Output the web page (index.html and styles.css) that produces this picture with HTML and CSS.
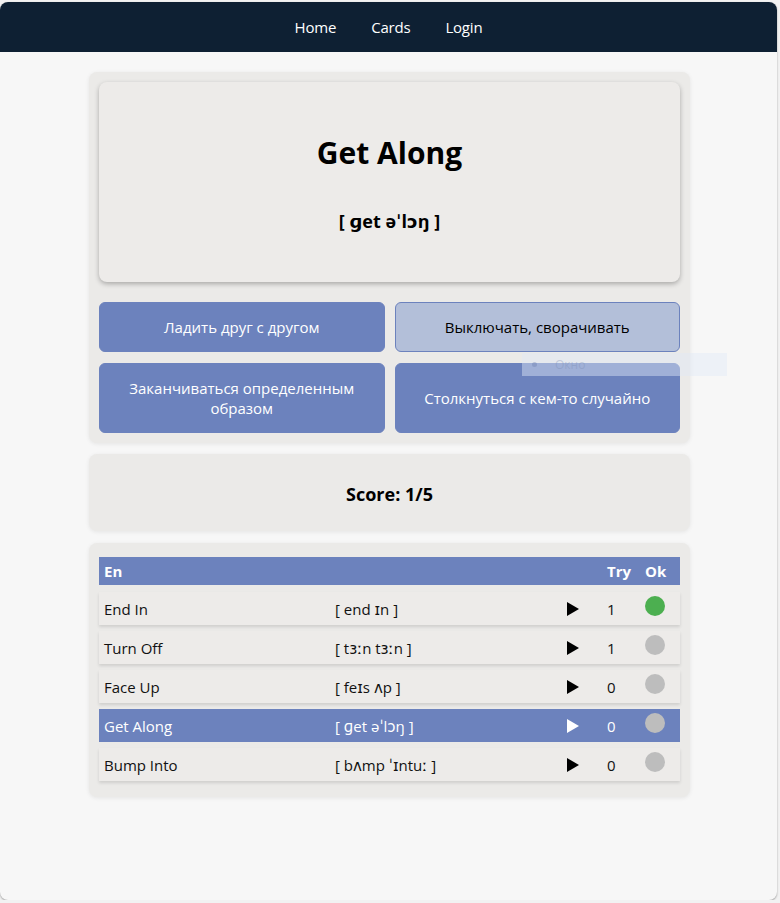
FILE: index.html
```html
<!DOCTYPE html>
<html lang="ru">
<head>
<meta charset="utf-8">
<title>Cards</title>
<link rel="stylesheet" href="styles.css">
</head>
<body>
<div class="app">
  <nav class="nav">
    <a class="nav-link">Home</a>
    <a class="nav-link">Cards</a>
    <a class="nav-link">Login</a>
  </nav>
  <main class="main">
    <section class="panel">
      <div class="flashcard">
        <div class="word">Get Along</div>
        <div class="phon">[ ɡet əˈlɔŋ ]</div>
      </div>
      <div class="options">
        <button class="opt">Ладить друг с другом</button>
        <button class="opt opt-active">Выключать, сворачивать</button>
        <button class="opt">Заканчиваться определенным образом</button>
        <button class="opt">Столкнуться с кем-то случайно</button>
      </div>
    </section>
    <section class="panel score-panel">
      <div class="score">Score: 1/5</div>
    </section>
    <section class="panel table-panel">
      <div class="thead">
        <span>En</span><span></span><span></span><span>Try</span><span>Ok</span>
      </div>
      <div class="row">
        <span>End In</span><span>[ end ɪn ]</span><span class="play"><svg viewBox="0 0 12 14" width="12" height="14"><polygon points="0,0 12,7 0,14"/></svg></span><span>1</span><span class="dot ok"></span>
      </div>
      <div class="row">
        <span>Turn Off</span><span>[ tɜːn tɜːn ]</span><span class="play"><svg viewBox="0 0 12 14" width="12" height="14"><polygon points="0,0 12,7 0,14"/></svg></span><span>1</span><span class="dot"></span>
      </div>
      <div class="row">
        <span>Face Up</span><span>[ feɪs ʌp ]</span><span class="play"><svg viewBox="0 0 12 14" width="12" height="14"><polygon points="0,0 12,7 0,14"/></svg></span><span>0</span><span class="dot"></span>
      </div>
      <div class="row row-active">
        <span>Get Along</span><span>[ ɡet əˈlɔŋ ]</span><span class="play"><svg viewBox="0 0 12 14" width="12" height="14"><polygon points="0,0 12,7 0,14"/></svg></span><span>0</span><span class="dot"></span>
      </div>
      <div class="row">
        <span>Bump Into</span><span>[ bʌmp ˈɪntuː ]</span><span class="play"><svg viewBox="0 0 12 14" width="12" height="14"><polygon points="0,0 12,7 0,14"/></svg></span><span>0</span><span class="dot"></span>
      </div>
    </section>
  </main>
  <div class="ghost"><span class="ghost-dot"></span>Окно</div>
</div>
</body>
</html>
```
FILE: styles.css
```css
* { box-sizing: border-box; }
html, body { margin: 0; padding: 0; }
body {
  background: #f2f2f2;
  font-family: "Open Sans", "DejaVu Sans", sans-serif;
  color: #111;
}
.app {
  position: relative;
  width: 777px;
  height: 898px;
  margin: 2px 0 0 0;
  background: #f7f7f7;
  border-radius: 8px;
  box-shadow: 0 1px 2px rgba(0,0,0,0.35);
}
.nav {
  height: 50px;
  background: #0e2033;
  border-radius: 8px 8px 0 0;
  display: flex;
  justify-content: center;
  align-items: center;
  gap: 35px;
}
.nav-link {
  color: #fff;
  font-size: 15px;
  letter-spacing: -0.2px;
}
.main {
  width: 601px;
  margin: 20px 0 0 89px;
}
.panel {
  background: #ebeae8;
  border-radius: 8px;
  padding: 10px;
  margin-bottom: 11px;
  box-shadow: 0 1px 4px rgba(0,0,0,0.08);
}
.flashcard {
  height: 200px;
  background: #edebe9;
  border-radius: 8px;
  box-shadow: 0 2px 5px rgba(0,0,0,0.28);
  display: flex;
  flex-direction: column;
  align-items: center;
  padding-top: 51px;
}
.word {
  font-size: 30px;
  font-weight: 700;
  line-height: 40px;
  color: #000;
}
.phon {
  font-size: 18px;
  font-weight: 700;
  line-height: 26px;
  margin-top: 35px;
  color: #000;
}
.options {
  margin-top: 20px;
  display: grid;
  grid-template-columns: 1fr 1fr;
  gap: 11px 10px;
}
.opt {
  font-family: inherit;
  font-size: 15px;
  line-height: 20px;
  padding: 14px 20px;
  border: 1px solid #6c82bd;
  border-radius: 6px;
  background: #6c82bd;
  color: #fff;
  text-align: center;
}
.opt-active {
  background: #b3bfd9;
  color: #000;
  border-color: #6c82bd;
}
.score-panel {
  height: 77px;
  display: flex;
  align-items: center;
  justify-content: center;
  margin-bottom: 12px;
}
.score {
  font-size: 18px;
  font-weight: 700;
  color: #000;
  margin-top: 2px;
}
.table-panel {
  padding: 14px 10px 16px;
}
.thead, .row {
  display: grid;
  grid-template-columns: 231px 232px 40px 38px 1fr;
  padding-left: 5px;
  align-items: center;
}
.thead {
  height: 28px;
  background: #6c82bd;
  color: #fff;
  font-weight: 700;
  font-size: 15px;
  margin-bottom: 7px;
}
.row {
  height: 33px;
  background: #edebe9;
  font-size: 15px;
  color: #111;
  box-shadow: 0 2px 3px rgba(0,0,0,0.12);
  margin-bottom: 6px;
}
.row:last-child { margin-bottom: 0; }
.row-active {
  background: #6c82bd;
  color: #fff;
  box-shadow: none;
}
.play svg { display: block; fill: #000; }
.row-active .play svg { fill: #fff; }
.dot {
  width: 20px;
  height: 20px;
  border-radius: 50%;
  background: #bdbdbd;
  align-self: start;
  margin-top: 4px;
}
.dot.ok { background: #4caf50; }
.ghost {
  position: absolute;
  left: 522px;
  top: 351px;
  width: 205px;
  height: 23px;
  background: rgba(225,232,246,0.45);
  display: flex;
  align-items: center;
  font-size: 12px;
  color: rgba(120,140,180,0.35);
  padding-left: 10px;
}
.ghost-dot {
  width: 5px;
  height: 5px;
  border-radius: 50%;
  background: rgba(100,120,170,0.35);
  margin-right: 18px;
}
```
